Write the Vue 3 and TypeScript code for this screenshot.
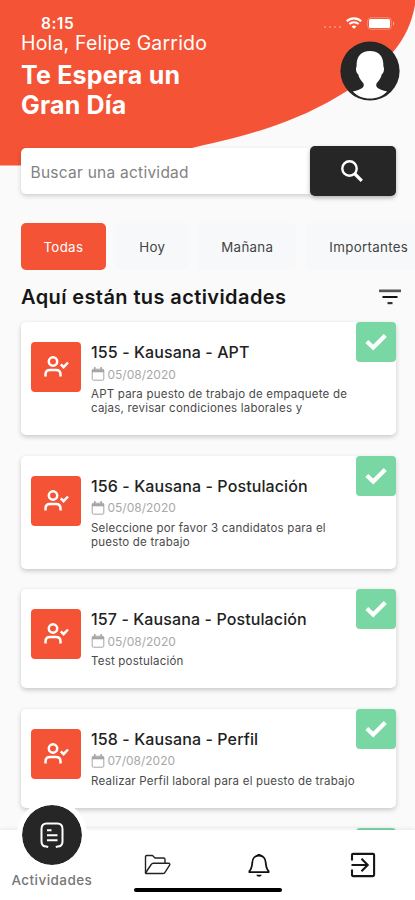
<script setup lang="ts">
import { ref } from 'vue'

interface Activity {
  id: number
  name: string
  date: string
  lines: string[]
}

const filters: string[] = ['Todas', 'Hoy', 'Mañana', 'Importantes']
const activeFilter = ref<string>('Todas')
const query = ref<string>('')

const activities: Activity[] = [
  { id: 155, name: 'Kausana - APT', date: '05/08/2020', lines: ['APT para puesto de trabajo de empaquete de', 'cajas, revisar condiciones laborales y'] },
  { id: 156, name: 'Kausana - Postulación', date: '05/08/2020', lines: ['Seleccione por favor 3 candidatos para el', 'puesto de trabajo'] },
  { id: 157, name: 'Kausana - Postulación', date: '05/08/2020', lines: ['Test postulación'] },
  { id: 158, name: 'Kausana - Perfil', date: '07/08/2020', lines: ['Realizar Perfil laboral para el puesto de trabajo'] },
]
</script>

<template>
  <div class="screen">
    <svg class="wave" width="415" height="166" viewBox="0 0 415 166" aria-hidden="true">
      <path d="M0 0H415V5C412 22 405 38 393 52C382 65 366 79 347 91C320 108 295 119 265 129C235 138.500 212 143 188 149C165 155 140 162 120 165.500H0Z" fill="#f45435" />
    </svg>

    <div class="status">
      <span class="time">8:15</span>
      <div class="status-icons">
        <span class="dots"><i v-for="n in 4" :key="n"></i></span>
        <svg width="16" height="12" viewBox="0 0 16 12" fill="none" stroke="#fff" stroke-width="2.100">
          <path d="M.8 4.300C4.900.400 11.100.400 15.200 4.300M3.400 7C6 4.600 10 4.600 12.600 7" />
          <path d="M8 11.800L5.600 9.400C7 8.200 9 8.200 10.400 9.400Z" fill="#fff" stroke="none" />
        </svg>
        <svg class="battery" width="28" height="13" viewBox="0 0 28 13">
          <rect x=".7" y=".7" width="23.600" height="11.600" rx="3.200" fill="none" stroke="#fff" stroke-opacity=".3" />
          <rect x="2" y="2" width="21" height="9" rx="1.500" fill="#fff" />
          <path d="M26 4.500C27.600 5.300 27.600 7.700 26 8.500Z" fill="#fff" fill-opacity=".5" />
        </svg>
      </div>
    </div>

    <header class="header">
      <div>
        <p class="hello">Hola, Felipe Garrido</p>
        <h1 class="headline">Te Espera un<br />Gran Día</h1>
      </div>
      <svg class="avatar" width="60" height="60" viewBox="0 0 60 60">
        <circle cx="30" cy="30" r="29.600" fill="#262626" />
        <path d="M30 10C21 10 16.300 15.500 16.600 25C16.600 26 16 26.500 16 28C16 30.500 16.800 32.500 18.300 33.500C19 37.500 21.500 40 23.500 42.500C24.800 46.500 21.500 48.300 12.800 50.500C17 55 23 57.500 30 57.500S43 55 47.200 50.500C38.500 48.300 35.200 46.500 36.500 42.500C38.500 40 41 37.500 41.700 33.500C43.200 32.500 44 30.500 44 28C44 26.500 43.400 26 43.400 25C43.700 15.500 39 10 30 10Z" fill="#fff" />
      </svg>
    </header>

    <div class="search">
      <input v-model="query" class="search-input" type="text" placeholder="Buscar una actividad" />
      <button class="search-button" aria-label="Buscar">
        <svg width="24" height="24" viewBox="0 0 24 24" fill="none" stroke="#fff">
          <circle cx="9.500" cy="9.500" r="7.200" stroke-width="2.400" />
          <path d="M15 15L21.800 21.800" stroke-width="3.200" />
        </svg>
      </button>
    </div>

    <div class="filters">
      <button v-for="f in filters" :key="f" class="filter" :class="{ active: f === activeFilter }" @click="activeFilter = f">{{ f }}</button>
    </div>

    <div class="section">
      <h2 class="section-title">Aquí están tus actividades</h2>
      <svg width="24" height="18" viewBox="0 0 24 18">
        <path d="M1 1.500H23V4.200H1Z" fill="#555" />
        <path d="M4.500 8H19.500V10H4.500Z" fill="#111" />
        <path d="M9.500 14H14.500V16.200H9.500Z" fill="#333" />
      </svg>
    </div>

    <main class="list">
      <article v-for="a in activities" :key="a.id" class="card">
        <div class="card-icon">
          <svg width="26" height="24" viewBox="0 0 26 24" fill="none" stroke="#fff" stroke-width="2.500">
            <circle cx="10" cy="6.500" r="4.200" />
            <path d="M2.500 21.500V19.500C2.500 16.500 4 15 7 15H13C16 15 17.500 16.500 17.500 19.500V21.500" />
            <path d="M17.800 9.300L20.600 12.200L25 7.500" />
          </svg>
        </div>
        <div class="card-body">
          <h3 class="card-title">{{ a.id }} - {{ a.name }}</h3>
          <p class="card-date">
            <svg width="14" height="14" viewBox="0 0 14 14" fill="none" stroke="#a6a6a6">
              <rect x="1.200" y="2.200" width="11.600" height="11" rx="1.200" />
              <path d="M1 4H13" stroke-width="2.600" />
              <path d="M3.800 0V3M10.200 0V3" stroke-width="1.500" />
            </svg>
            <span>{{ a.date }}</span>
          </p>
          <p class="card-text"><span v-for="l in a.lines" :key="l">{{ l }}</span></p>
        </div>
        <span class="check">
          <svg width="22" height="18" viewBox="0 0 22 18" fill="none" stroke="#fff" stroke-width="4.200">
            <path d="M1.800 8.500L8.200 14.500L20.300 2.500" />
          </svg>
        </span>
      </article>
      <article class="card next">
        <span class="check"></span>
      </article>
    </main>

    <nav class="nav">
      <a class="nav-item current">
        <span class="bubble">
          <svg width="24" height="27" viewBox="0 0 24 27" fill="none" stroke="#fff" stroke-width="2">
            <path d="M8.200 25.200L6.500 24.500C3 24.500 1.500 23 1.500 19.500V7C1.500 3.500 3 1.500 6.500 1.500H17.500C21 1.500 22.500 3.500 22.500 7V19.500C22.500 23 21 24.500 17.500 24.500L15.800 25.200" />
            <path d="M7 8.200H11.500M7 13.200H17.500M7 18.300H17.500" />
          </svg>
        </span>
        <span class="nav-label">Actividades</span>
      </a>
      <a class="nav-item folder">
        <svg width="27" height="22" viewBox="0 0 27 22" fill="none" stroke="#222" stroke-width="1.400" stroke-linejoin="round">
          <path d="M1.500 19V2.800C1.500 2 2 1.500 2.800 1.500H8.500L11 4H19.500C20.400 4 21 4.600 21 5.500V9" />
          <path d="M1.500 19L7.200 10.500C7.700 9.700 8.400 9.300 9.300 9.300H24.500C25.700 9.300 26.200 10.200 25.600 11.200L21 18.300C20.500 19.100 19.800 19.500 18.800 19.500H2.200C1.800 19.500 1.500 19.300 1.500 19Z" />
        </svg>
      </a>
      <a class="nav-item">
        <svg width="22" height="25" viewBox="0 0 22 25" fill="none" stroke="#111" stroke-width="1.800" stroke-linejoin="round">
          <path d="M11 2.500C6.800 2.500 4.500 5.800 4.300 9.500C4 14.500 3.500 16 1.400 18.200V19.200H20.600V18.200C18.500 16 18 14.500 17.700 9.500C17.500 5.800 15.200 2.500 11 2.500Z" />
          <path d="M9.500 1H12.500V3H9.500Z" fill="#111" stroke="none" />
          <path d="M8.300 21.800H13.700C13.200 24.300 8.800 24.300 8.300 21.800Z" fill="#111" stroke="none" />
        </svg>
      </a>
      <a class="nav-item">
        <svg width="26" height="26" viewBox="0 0 26 26" fill="none" stroke="#161616" stroke-width="2.100">
          <path d="M2 8.500V3C2 2.300 2.400 1.900 3 1.900H23C23.700 1.900 24.100 2.300 24.100 3V23C24.100 23.700 23.700 24.100 23 24.100H3C2.400 24.100 2 23.700 2 23V17.500" />
          <path d="M1.500 13H17M11.500 6.800L17.700 13L11.500 19.200" />
        </svg>
      </a>
      <span class="home-bar"></span>
    </nav>
  </div>
</template>

<style>
body {
  margin: 0;
  background: #fafafa;
}
</style>

<style scoped>
.screen {
  position: relative;
  width: 415px;
  height: 900px;
  overflow: hidden;
  background: #fafafa;
  font-family: Inter, "Liberation Sans", sans-serif;
  color: #222;
}
p,
h1,
h2,
h3 {
  margin: 0;
}
svg {
  display: block;
  flex: none;
}
button {
  border: 0;
  font: inherit;
}
.wave {
  position: absolute;
  top: 0;
  left: 0;
}
.status {
  position: relative;
  display: flex;
  justify-content: space-between;
  align-items: center;
  height: 31px;
  padding: 15px 20px 0 41px;
  box-sizing: border-box;
  color: #fff;
}
.time {
  font-size: 15.500px;
  font-weight: 600;
  letter-spacing: 0.500px;
}
.status-icons {
  display: flex;
  align-items: center;
  gap: 5px;
}
.dots {
  display: flex;
  gap: 3px;
  padding-top: 8px;
}
.dots i {
  width: 2px;
  height: 2px;
  border-radius: 1px;
  background: rgba(255, 255, 255, 0.4);
}
.header {
  position: relative;
  display: flex;
  justify-content: space-between;
  height: 115px;
  padding: 0 15px 0 21px;
  color: #fff;
}
.hello {
  font-size: 19.500px;
  line-height: 24px;
  letter-spacing: 0.180px;
  white-space: nowrap;
}
.headline {
  margin-top: 5px;
  font-size: 25px;
  line-height: 30px;
  font-weight: 700;
  letter-spacing: 0.200px;
}
.avatar {
  margin-top: 10px;
}
.search {
  position: relative;
  display: flex;
  align-items: center;
  margin: 0 19px 0 20.500px;
  height: 50px;
}
.search-input {
  flex: 1;
  min-width: 0;
  height: 46px;
  box-sizing: border-box;
  padding: 2px 10px 0;
  border: 0;
  border-radius: 5px 0 0 5px;
  background: #fff;
  box-shadow: 0 2px 5px rgba(0, 0, 0, 0.18);
  font-family: inherit;
  font-size: 15.500px;
  letter-spacing: 0.250px;
  outline: none;
}
.search-input::placeholder {
  color: #828282;
  opacity: 1;
}
.search-button {
  display: flex;
  align-items: center;
  justify-content: center;
  width: 86px;
  height: 50px;
  padding: 0 2px 0 0;
  border-radius: 5px;
  background: #262626;
  box-shadow: 0 2px 4px rgba(0, 0, 0, 0.3);
}
.filters {
  display: flex;
  gap: 10px;
  margin: 27px 0 0 20.500px;
}
.filter {
  flex: none;
  height: 47px;
  padding: 0 23px;
  border-radius: 5px;
  background: #f6f8f9;
  color: #444;
  font-size: 13.300px;
  letter-spacing: 0.320px;
}
.filter.active {
  background: #f45435;
  color: #fff;
}
.section {
  display: flex;
  justify-content: space-between;
  align-items: center;
  height: 52px;
  padding: 2px 13px 0 21px;
  box-sizing: border-box;
}
.section-title {
  font-size: 20px;
  font-weight: 600;
  letter-spacing: 0.400px;
  color: #161616;
}
.list {
  display: flex;
  flex-direction: column;
  gap: 20.600px;
  padding: 0 19px 0 20.500px;
}
.card {
  position: relative;
  display: flex;
  gap: 10.500px;
  padding: 20px 10px;
  background: #fff;
  border-radius: 5px;
  box-shadow: 0 2px 5px rgba(0, 0, 0, 0.2);
}
.card.next {
  height: 60px;
}
.card-icon {
  display: flex;
  align-items: center;
  justify-content: center;
  width: 50px;
  height: 50px;
  border-radius: 4px;
  background: #f45435;
}
.card-title {
  font-size: 16px;
  line-height: 20px;
  font-weight: 500;
  letter-spacing: 0.110px;
  white-space: nowrap;
}
.card-date {
  display: flex;
  align-items: center;
  gap: 2.500px;
  margin-top: 4px;
  height: 16px;
  font-size: 12px;
  color: #a8a8a8;
}
.card-text {
  margin-top: 5px;
  font-size: 11.500px;
  line-height: 14px;
  letter-spacing: 0.210px;
  color: #4a4a4a;
  white-space: nowrap;
}
.card-text span {
  display: block;
}
.check {
  position: absolute;
  top: 0;
  right: 0;
  display: flex;
  align-items: center;
  justify-content: center;
  width: 40px;
  height: 40px;
  border-radius: 4px;
  background: #78d7a2;
}
.nav {
  position: absolute;
  left: 0;
  right: 0;
  bottom: 0;
  height: 70px;
  display: grid;
  grid-template-columns: repeat(4, 1fr);
  background: #fff;
  box-shadow: 0 -1px 4px rgba(0, 0, 0, 0.08);
}
.nav-item {
  display: flex;
  justify-content: center;
  align-items: center;
}
.nav-item.folder {
  padding-left: 3px;
}
.nav-item.current {
  flex-direction: column;
  justify-content: flex-start;
  margin-top: -30px;
}
.bubble {
  display: flex;
  align-items: center;
  justify-content: center;
  width: 60px;
  height: 60px;
  flex: none;
  border: 5px solid #fff;
  border-radius: 50%;
  background: #262626;
  background-clip: padding-box;
}
.nav-label {
  margin-top: 2px;
  font-size: 13.500px;
  line-height: 16px;
  font-weight: 500;
  letter-spacing: 0.450px;
  color: #777;
}
.home-bar {
  position: absolute;
  left: 134px;
  bottom: 8px;
  width: 148px;
  height: 4px;
  border-radius: 2px;
  background: #000;
}
</style>
